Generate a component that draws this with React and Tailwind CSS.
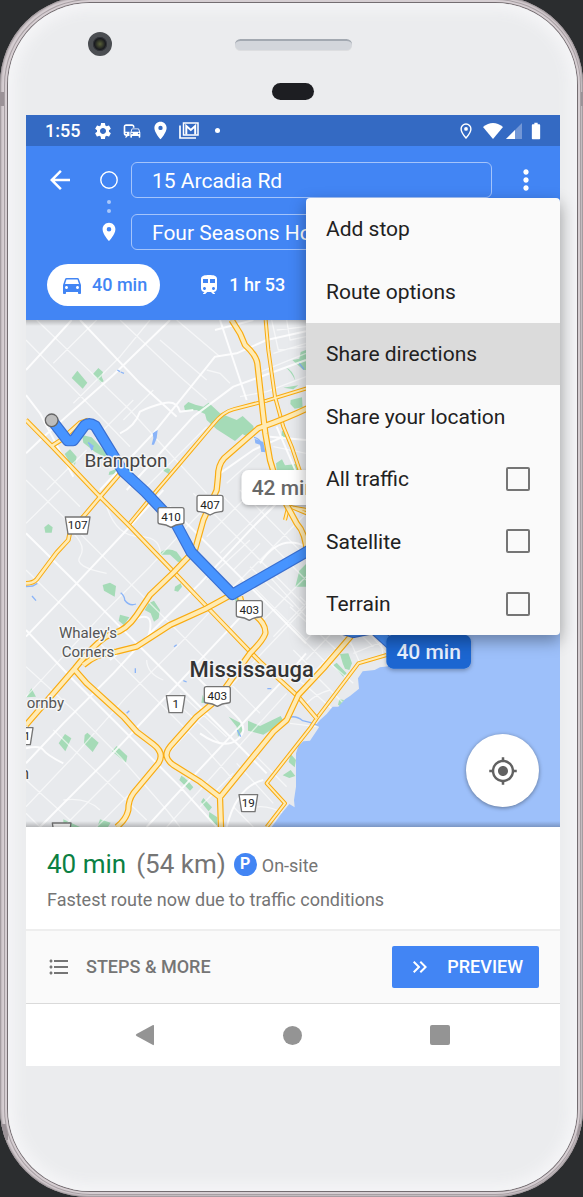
import {
  MdArrowBack,
  MdBatteryFull,
  MdCommute,
  MdDirectionsCar,
  MdFormatListBulleted,
  MdKeyboardDoubleArrowRight,
  MdMoreVert,
  MdMyLocation,
  MdPlace,
  MdSettings,
  MdTrain,
} from "react-icons/md";

const parks = [
  "M172,152 L202,188 188,206 155,174Z",
  "M235,144 L249,156 245,170 251,184 242,188 219,162Z",
  "M492,258 L505,246 526,254 550,260 566,248 600,280 650,300 668,288 700,318 704,346 684,352 668,342 645,363 590,328 560,300 555,282 530,270 495,272Z",
  "M186,345 L215,352 262,402 255,412 225,396 190,368Z",
  "M134,402 L150,388 170,410 165,434 148,426Z M268,455 L290,446 284,462 266,465Z",
  "M858,90 L842,96 838,116 817,120 850,150 858,150Z",
  "M795,142 Q820,150 826,182 Q810,150 795,142Z M790,203 L835,196 820,208Z",
  "M812,240 L846,232 848,262 824,266 811,252Z",
  "M768,430 L786,418 795,436 830,432 838,450 770,450Z",
  "M786,332 L800,336 798,356 784,350Z M432,440 L452,448 446,462 430,452Z",
  "M85,612 L98,622 95,638 76,638 73,622Z",
  "M418,700 Q440,680 470,695 L494,728 474,726 450,704 424,704Z",
  "M248,795 L270,788 288,798 284,830 252,812Z",
  "M465,800 L482,790 486,800 474,815 463,812Z",
  "M386,850 L402,842 420,870 416,895 402,905 392,880 374,870Z M300,884 L328,892 312,916 296,902Z",
  "M858,732 L838,752 826,800 858,800Z",
  "M34,1105 L48,1130 20,1132Z",
  "M135,1242 L154,1255 136,1294 116,1270Z",
  "M202,1238 L236,1268 218,1296 192,1270 194,1245Z",
  "M290,1278 L322,1308 318,1328 276,1294Z",
  "M484,1367 Q500,1375 520,1402 L510,1412 478,1380Z",
  "M550,1434 L576,1462 566,1474 543,1446Z M568,1476 L592,1492 592,1518 566,1498Z",
  "M626,1190 L660,1208 668,1230 654,1250 650,1220Z",
  "M684,1202 L720,1218 782,1188 792,1206 730,1244 684,1232Z",
  "M812,1302 L828,1320 824,1342 806,1326Z M788,1366 L812,1350 826,1368 808,1374Z",
  "M130,1498 L180,1521 130,1521Z M232,1521 L240,1498 272,1508 264,1521Z",
  "M960,1002 L985,1000 996,1030 988,1050 975,1046 968,1030Z M950,1028 L980,1060 970,1070 940,1036Z",
  "M958,1138 L972,1140 966,1162 954,1154Z M548,1124 L556,1150 544,1148Z",
  "M640,830 L660,835 650,850Z M1098,1046 L1122,1048 1116,1056Z",
];

const creeks = [
  "M292,150 l8,5 M302,156 l10,4",
  "M702,352 Q720,356 724,372 T734,396",
  "M204,368 Q216,374 218,390",
  "M18,800 l20,-2 14,-8 M36,828 l12,14",
  "M302,818 q12,10 12,22 q14,20 34,12",
  "M346,1045 v14 M320,1180 l8,-8 M490,1082 l10,4 M742,1106 l12,0",
  "M808,1192 q20,-6 40,10 q20,4 46,14",
  "M652,1230 l10,20 M462,980 l8,-6 M838,130 l14,18",
];

const arterials = [
  "M18,150 L155,0",
  "M18,400 L60,360 280,165 450,0",
  "M160,470 L60,280 18,225",
  "M180,0 L360,190 470,290",
  "M240,510 L400,340 545,160 585,110 650,100 740,60 858,34",
  "M320,510 L520,290 640,200 858,120",
  "M585,30 L700,0 M600,0 L680,240",
  "M300,340 Q345,320 360,275 Q390,260 430,250 T480,275 L520,270",
  "M600,460 L700,390 790,350 M750,350 L858,360 M770,320 L830,460",
  "M18,640 L200,820 290,910 400,1020 520,1140 640,1260 740,1360",
  "M18,930 L160,1080 280,1200 380,1300 480,1400 590,1521",
  "M60,1521 L250,1330 400,1170 550,1010 700,850",
  "M18,1330 L130,1210 280,1060 400,930 540,790 700,620 780,540",
  "M18,950 L170,790 320,630 430,510",
  "M450,560 L620,730 760,870 858,970",
  "M380,1521 L500,1390 640,1240 780,1090 858,1000",
  "M340,900 Q400,870 390,930 T320,980 L270,1020",
  "M520,1060 L650,1190 Q690,1230 650,1260 T540,1240",
  "M18,1285 Q60,1275 70,1290 T130,1330",
  "M620,1521 Q650,1400 730,1380 M720,730 Q780,640 858,680",
];

const localStreets = [
  "M18,60 L330,380 M50,0 L330,270 440,390 560,520",
  "M300,0 L480,170 560,240",
  "M420,60 L560,180 M470,0 L600,110",
  "M370,510 L560,320",
  "M100,130 L230,0 M160,250 L300,110 390,0",
  "M560,150 L600,160 630,190 M760,100 L858,70",
  "M225,355 L340,240 M310,300 L400,210",
  "M660,230 L740,215 858,170 M710,160 L858,100",
  "M755,0 L775,90 858,80 M800,0 L810,60 858,50 M770,30 L858,20",
  "M760,380 L858,400 M620,490 L720,400",
  "M80,510 L200,390 M60,440 L180,560",
  "M18,610 L120,510 M18,480 L190,650 330,790 470,930 600,1060 720,1180",
  "M18,750 L150,880 250,980 350,1080 450,1180 560,1290 640,1380",
  "M18,1040 L160,1170 300,1310 440,1470 480,1521",
  "M18,1460 L160,1310 320,1130 500,950 640,800 780,660 858,580",
  "M18,1130 L110,1030 250,880 390,740 520,600 600,520",
  "M130,1521 L300,1350 M230,1521 L400,1350 500,1240 640,1090 858,860",
  "M440,1521 L540,1410 700,1230 800,1120",
  "M18,1380 L150,1500 M18,1480 L60,1521 M100,1230 L380,1500",
  "M130,1440 Q200,1430 240,1470",
  "M260,560 Q290,650 360,650 T420,720 M160,640 Q200,680 180,710 T260,760",
  "M520,520 L700,700 858,860",
  "M600,520 L760,680 858,780 M660,510 L858,710",
  "M560,650 L700,510 M600,700 L760,540 M640,750 L720,670 M560,780 L690,660",
  "M730,900 L858,770 M760,950 L858,850 M740,760 L858,890 M700,800 L858,960",
  "M690,740 L740,790 820,860",
  "M470,1150 L560,1230 600,1270 M480,1120 L620,1250 M430,1080 Q380,1060 380,1020",
  "M640,1460 L700,1521 M700,1300 L800,1400 M650,1330 L760,1450",
  "M660,1480 Q720,1440 790,1480 M540,1460 L640,1360",
  "M858,900 L990,760 M858,960 L1010,800 M858,1020 L1050,820 M860,1080 L1080,850",
  "M810,860 L960,1000 M840,830 L1000,980 M880,810 L1060,980 M820,930 L930,1040",
  "M820,990 L900,1070 M850,1090 L940,1170 M880,1060 L970,1150 M810,1060 L860,1100",
  "M985,950 L1020,1030 M1000,1000 L1100,960 M1040,930 L1100,1000 M1080,950 L1090,1010",
  "M930,1030 L1000,1090 M860,1150 Q890,1120 930,1110 M810,1210 L890,1220",
];

const thinHighways = [
  "M737,0 L745,90 765,230 790,320 815,380 842,460",
  "M860,205 L740,242 640,268 Q610,275 580,312 L480,430 410,512 325,615",
  "M870,1225 L740,1390 795,1450 740,1521",
  "M870,1225 L890,1195 1015,1030 1100,1005",
  "M795,600 L805,560 860,570 M800,555 L860,580",
];

const highways = [
  "M18,300 L95,378 230,520 330,620 460,755 570,870 690,995 720,1025 835,1130 890,1195",
  "M95,378 L120,362 180,308 204,300",
  "M305,455 L245,525 190,590 150,635 145,660 110,698 50,778 Q40,790 18,790",
];

const freeways = [
  "M635,0 L660,40 675,75 Q708,105 712,130 L722,220 736,340 750,420 768,480 800,555 830,610 Q858,640 860,700",
  "M862,265 Q800,295 715,325 L612,415 Q594,435 594,470 L590,510 550,600 525,690 460,758 390,825 350,885 Q320,930 280,940 Q240,950 165,1045 L18,1215",
  "M637,823 L560,865 450,915 350,980 290,995 Q230,1000 190,1035",
  "M660,830 L668,862 Q740,900 736,940 Q730,960 690,1000 L640,1070 590,1140 530,1190 450,1280 Q425,1310 460,1335 L540,1385 600,1432 603,1521",
  "M165,1050 L200,1090 310,1190 350,1235 400,1273 Q435,1300 415,1330 L340,1420 Q325,1440 325,1470 Q318,1500 290,1521",
  "M600,1432 L760,1235 800,1200 835,1125 910,1045 1000,940",
];

const route =
  "M95,300 L143,362 H160 L194,316 Q208,306 226,318 L310,455 375,515 470,615 514,697 637,823 857,697 1000,620";
const routeEnd = "M960,925 L1000,937 1060,925 1120,980";

function Road({ paths, outer, inner }) {
  const all = paths.join(" ");
  return (
    <g fill="none" strokeLinejoin="round">
      <path d={all} stroke="#f9ab10" strokeWidth={outer} />
      <path d={all} stroke="#ffebb4" strokeWidth={inner} />
    </g>
  );
}

function Shield({ x, y, label, regional }) {
  const w = label.length > 2 ? 37 : 28;
  const d = regional
    ? `M${-w},-25 H${w} L${w - 8},26 H${8 - w}Z`
    : "M-33,-28 H33 Q39,-28 39,-22 V15 Q39,21 32,21 Q14,22 0,31 Q-14,22 -32,21 Q-39,21 -39,15 V-22 Q-39,-28 -33,-28Z";
  return (
    <g transform={`translate(${x} ${y})`}>
      <path d={d} fill="#fff" stroke="#757575" strokeWidth="4" strokeLinejoin="round" />
      <text y="12" textAnchor="middle" fontSize="35" fill="#222">
        {label}
      </text>
    </g>
  );
}

function PlaceLabel({ x, y, size, weight = 400, fill = "#555", anchor = "start", children }) {
  return (
    <text
      x={x}
      y={y}
      fontSize={size}
      fontWeight={weight}
      fill={fill}
      textAnchor={anchor}
      stroke="#f4f5f6"
      strokeWidth="9"
      strokeLinejoin="round"
      paintOrder="stroke"
    >
      {children}
    </text>
  );
}

function RouteMap() {
  return (
    <svg viewBox="18 0 1602 1521" className="block h-auto w-full" role="img" aria-label="Map">
      <defs>
        <linearGradient id="edge" x1="0" y1="0" x2="0" y2="1">
          <stop offset="0" stopColor="#000" stopOpacity="0.22" />
          <stop offset="1" stopColor="#000" stopOpacity="0" />
        </linearGradient>
        <filter id="drop" x="-20%" y="-20%" width="140%" height="160%">
          <feDropShadow dx="0" dy="5" stdDeviation="7" floodOpacity="0.3" />
        </filter>
      </defs>
      <rect x="18" width="1602" height="1521" fill="#e8eaed" />
      <g fill="#a5dbb7">
        {parks.map((d) => (
          <path key={d} d={d} />
        ))}
      </g>
      <g fill="none" stroke="#fff" strokeLinejoin="round">
        <path d={localStreets.join(" ")} strokeWidth="4" opacity="0.6" />
        <path d={arterials.join(" ")} strokeWidth="6" opacity="0.85" />
      </g>
      <path d={creeks.join(" ")} fill="none" stroke="#8ab4f8" strokeWidth="4" />
      <path d="M398,340 L413,330 410,355 402,374 395,374 400,354Z" fill="#8ab4f8" />
      <path d="M704,356 L730,366 736,396 724,396 720,374 706,370Z M204,366 L222,378 214,392Z" fill="#8ab4f8" />
      <path
        d="M1088,900 L1088,945 1104,960 1112,1038 1080,1042 1064,1050 1028,1054 1014,1075 1017,1106 990,1128 975,1138 955,1160 938,1160 920,1182 900,1200 890,1212 897,1222 888,1235 870,1262 850,1264 835,1278 828,1300 828,1400 822,1440 824,1462 808,1452 785,1480 755,1521 H1620 V800Z"
        fill="#9dc0fa"
      />
      <Road paths={thinHighways} outer={12} inner={6} />
      <Road paths={highways} outer={14} inner={8} />
      <Road paths={freeways} outer={19} inner={12} />
      <g fill="none" strokeLinejoin="round" strokeLinecap="round">
        <path d={route + routeEnd} stroke="#3a6fd0" strokeWidth="34" />
        <path d={route + routeEnd} stroke="#4794ff" strokeWidth="27" />
      </g>
      <circle cx="95" cy="301" r="19" fill="#bdbdbd" stroke="#666" strokeWidth="4" />

      <PlaceLabel x={318} y={440} size={57} anchor="middle" fill="#444">Brampton</PlaceLabel>
      <PlaceLabel x={204} y={954} size={45} anchor="middle">Whaley's</PlaceLabel>
      <PlaceLabel x={204} y={1010} size={45} anchor="middle">Corners</PlaceLabel>
      <PlaceLabel x={695} y={1071} size={66} weight={500} anchor="middle" fill="#333">Mississauga</PlaceLabel>
      <PlaceLabel x={20} y={1164} size={45}>ornby</PlaceLabel>
      <PlaceLabel x={27} y={1377} size={48} anchor="end" fill="#444">n</PlaceLabel>

      <Shield x={173} y={616} label="107" regional />
      <Shield x={453} y={591} label="410" />
      <Shield x={570} y={554} label="407" />
      <Shield x={688} y={870} label="403" />
      <Shield x={592} y={1128} label="403" />
      <Shield x={467} y={1152} label="1" regional />
      <Shield x={685} y={1449} label="19" regional />
      <Shield x={11} y={1248} label="11" regional />
      <Shield x={125} y={1534} label="25" regional />

      <g filter="url(#drop)">
        <rect x="665" y="450" width="252" height="105" rx="21" fill="#fff" />
        <rect x="1099" y="944" width="254" height="102" rx="21" fill="#1a66d1" />
      </g>
      <text x="695" y="526" fontSize="63" fontWeight="500" fill="#686868">42 min</text>
      <text x="1226" y="1018" fontSize="63" fontWeight="500" fill="#e8f0fe" textAnchor="middle">40 min</text>
      <rect x="18" width="1602" height="18" fill="url(#edge)" />
      <rect x="18" width="1602" height="18" fill="url(#edge)" transform="matrix(1 0 0 -1 0 1521)" />
    </svg>
  );
}

function MailStackIcon() {
  return (
    <svg viewBox="0 0 20 17" className="h-[17px] w-5" fill="none" stroke="currentColor" aria-hidden="true">
      <path d="M1 3.500V16H17" strokeWidth="1.700" />
      <rect x="4.500" y="1" width="14.500" height="12" strokeWidth="1.500" />
      <path d="M7.300 12.500V4L11.800 8 16.200 4V12.500" strokeWidth="2" />
    </svg>
  );
}

function LocationOutlineIcon() {
  return (
    <svg viewBox="0 0 12 16" className="h-4 w-3" fill="none" stroke="currentColor" aria-hidden="true">
      <path d="M6 1A4.900 4.900 0 0 1 10.900 6C10.900 9.500 6 15 6 15S1.100 9.500 1.100 6A4.900 4.900 0 0 1 6 1Z" strokeWidth="1.400" />
      <circle cx="6" cy="5.900" r="1.900" fill="currentColor" stroke="none" />
    </svg>
  );
}

function StatusBar() {
  return (
    <div className="flex h-[31px] items-center bg-[#346ac3] pr-[14px] pl-[19px] text-white">
      <span className="text-lg leading-6 font-medium">1:55</span>
      <MdSettings className="ml-[13px] size-5" />
      <MdCommute className="ml-[9px] size-5" />
      <MdPlace className="ml-2 size-[21px]" />
      <span className="ml-2">
        <MailStackIcon />
      </span>
      <span className="ml-4 size-[5px] rounded-full bg-white" />
      <span className="ml-auto">
        <LocationOutlineIcon />
      </span>
      <svg viewBox="0 0 20 16" className="ml-[11px] h-4 w-5" aria-hidden="true">
        <path d="M0 4Q10-4 20 4L10 16Z" fill="#fff" />
      </svg>
      <svg viewBox="0 0 16 16" className="ml-[3px] size-4" aria-hidden="true">
        <path d="M0 16 16 0V16Z" fill="#7397d6" />
        <path d="M0 16 9 7V16Z" fill="#fff" />
      </svg>
      <MdBatteryFull className="ml-1 size-5" />
    </div>
  );
}

function RouteHeader() {
  const field =
    "col-start-3 ml-[7px] h-9 min-w-0 rounded-md border border-[#a4c4fb] bg-transparent px-5 pt-0.5 text-[21px] text-white outline-none";
  return (
    <header className="bg-[#4285f4] pt-4 pb-[14px] text-white">
      <div className="grid grid-cols-[68px_30px_1fr_68px] gap-y-4">
        <button aria-label="Back" className="flex h-9 items-center justify-center">
          <MdArrowBack className="size-[30px]" />
        </button>
        <div className="col-start-2 row-span-2 row-start-1 flex flex-col items-center">
          <span className="flex h-9 items-center">
            <svg viewBox="0 0 18 18" className="size-[18px]" fill="none" aria-hidden="true">
              <circle cx="9" cy="9" r="8.200" stroke="#fff" strokeWidth="1.400" />
            </svg>
          </span>
          <span className="flex h-4 flex-col items-center justify-center gap-[5px]">
            <span className="size-1 rounded-full bg-[#a9c8fa]" />
            <span className="size-1 rounded-full bg-[#a9c8fa]" />
          </span>
          <span className="flex h-9 items-center">
            <MdPlace className="size-[22px]" />
          </span>
        </div>
        <input aria-label="Starting point" defaultValue="15 Arcadia Rd" className={field} />
        <button aria-label="More options" className="flex h-9 items-center justify-center">
          <MdMoreVert className="size-8" />
        </button>
        <input aria-label="Destination" defaultValue="Four Seasons Hotel" className={field} />
      </div>
      <div className="mt-[14px] flex pl-[21px] text-lg font-medium">
        <button className="flex h-[42px] items-center gap-2 rounded-full bg-white px-[13px] text-[#4285f4]">
          <MdDirectionsCar className="size-6" />
          40 min
        </button>
        <button className="ml-[37px] flex h-[42px] items-center gap-2">
          <MdTrain className="size-6" />
          1 hr 53
        </button>
      </div>
    </header>
  );
}

const actions = ["Add stop", "Route options", "Share directions", "Share your location"];
const layers = ["All traffic", "Satellite", "Terrain"];

function OverflowMenu() {
  return (
    <div className="absolute top-[83px] right-0 grid h-[437px] w-[254px] auto-rows-fr rounded-sm bg-[#fafafa] text-[21px] text-[#212121] shadow-[0_6px_16px_rgba(0,0,0,0.35)]">
      {actions.map((name) => (
        <button
          key={name}
          className={
            name === "Share directions"
              ? "bg-[#dbdbdb] pt-0.5 pl-5 text-left"
              : "pt-0.5 pl-5 text-left"
          }
        >
          {name}
        </button>
      ))}
      {layers.map((name) => (
        <label key={name} className="flex items-center justify-between pr-[30px] pl-5">
          <span className="pt-0.5">{name}</span>
          <input
            type="checkbox"
            className="size-6 appearance-none rounded-xs border-2 border-[#757575] checked:bg-[#4285f4]"
          />
        </label>
      ))}
    </div>
  );
}

function RouteSummary() {
  return (
    <section className="bg-white">
      <div className="h-[102px] px-[21px] pt-[19px]">
        <div className="flex items-center leading-9">
          <span className="text-[26px] text-[#0b8043]">40 min</span>
          <span className="ml-2.5 text-[26px] text-[#757575]">(54 km)</span>
          <span className="ml-2 flex size-[23px] items-center justify-center rounded-full bg-[#4285f4] text-base font-bold text-white">
            P
          </span>
          <span className="ml-[5px] pt-1 text-lg text-[#757575]">On-site</span>
        </div>
        <p className="mt-1 text-lg text-[#757575]">Fastest route now due to traffic conditions</p>
      </div>
      <div className="flex h-[75px] items-center justify-between border-t-2 border-b border-t-[#eeeeee] border-b-[#dadada] bg-[#fafafa] px-[21px] text-lg font-medium">
        <button className="flex items-center gap-[15px] text-[#757575]">
          <MdFormatListBulleted className="size-6" />
          STEPS &amp; MORE
        </button>
        <button className="flex h-[42px] items-center gap-[15px] rounded-xs bg-[#4285f4] px-4 text-white">
          <MdKeyboardDoubleArrowRight className="size-6" />
          PREVIEW
        </button>
      </div>
    </section>
  );
}

function SystemNav() {
  return (
    <nav className="flex h-[62px] items-center justify-center gap-32 bg-white pr-0.5 text-[#949494]">
      <button aria-label="System back">
        <svg viewBox="0 0 20 22" className="h-[22px] w-5" fill="currentColor">
          <path d="M18 1Q19 .5 19 2V20Q19 21.500 18 21L1.500 12Q0 11 1.500 10Z" />
        </svg>
      </button>
      <button aria-label="Home" className="size-[19px] rounded-full bg-[#949494]" />
      <button aria-label="Recent apps" className="size-5 rounded-xs bg-[#949494]" />
    </nav>
  );
}

function Notches({ className }) {
  return (
    <div className={className}>
      <span className="block h-[14px] bg-[#9b9297]" />
      <span className="block h-[16px] bg-[#9b9297]" />
    </div>
  );
}

export default function App() {
  return (
    <div className="min-h-screen overflow-hidden bg-[#2b2d2f] font-[Roboto,sans-serif]">
      <div className="relative -mt-1 overflow-hidden rounded-[88px] bg-[#d6ced2] pt-[7px] pr-1.5 pb-1.5 pl-2 shadow-[inset_0_0_2px_1px_#938b8f]">
        <Notches className="absolute top-24 bottom-[57px] left-0 flex w-2 flex-col justify-between" />
        <Notches className="absolute top-24 right-0 bottom-[57px] flex w-1.5 flex-col justify-between" />
        <div className="relative rounded-[82px] bg-[#ebecee] pr-[17px] pb-[125px] pl-[18px] shadow-[0_0_0_1px_#746d71,0_0_0_3px_#d6ced2,0_0_0_4px_#a79fa3,inset_0_0_14px_7px_#f5f5f7]">
          <div className="flex h-28 flex-col pt-[29px]">
            <div className="grid grid-cols-[1fr_117px_1fr] items-center">
              <span className="ml-[62px] flex size-6 items-center justify-center rounded-full border-[5px] border-[#4b4e52] bg-[radial-gradient(circle,#59603a,#14151c_60%)] ring-1 ring-[#303236] ring-inset" />
              <span className="h-[11px] rounded-full border-t-2 border-t-[#a3a9b1] bg-[#d3d6db] shadow-[0_1px_0_#dddee0]" />
            </div>
            <span className="mx-auto mt-[27px] h-[17px] w-[42px] rounded-full bg-[#1d1e22]" />
          </div>
          <main className="relative">
            <StatusBar />
            <RouteHeader />
            <div className="relative">
              <RouteMap />
              <button
                aria-label="My location"
                className="absolute right-[21px] bottom-5 flex size-[73px] items-center justify-center rounded-full bg-white text-[#616161] shadow-[0_1px_4px_rgba(0,0,0,0.4)]"
              >
                <MdMyLocation className="size-[30px]" />
              </button>
            </div>
            <RouteSummary />
            <SystemNav />
            <OverflowMenu />
          </main>
        </div>
      </div>
    </div>
  );
}
